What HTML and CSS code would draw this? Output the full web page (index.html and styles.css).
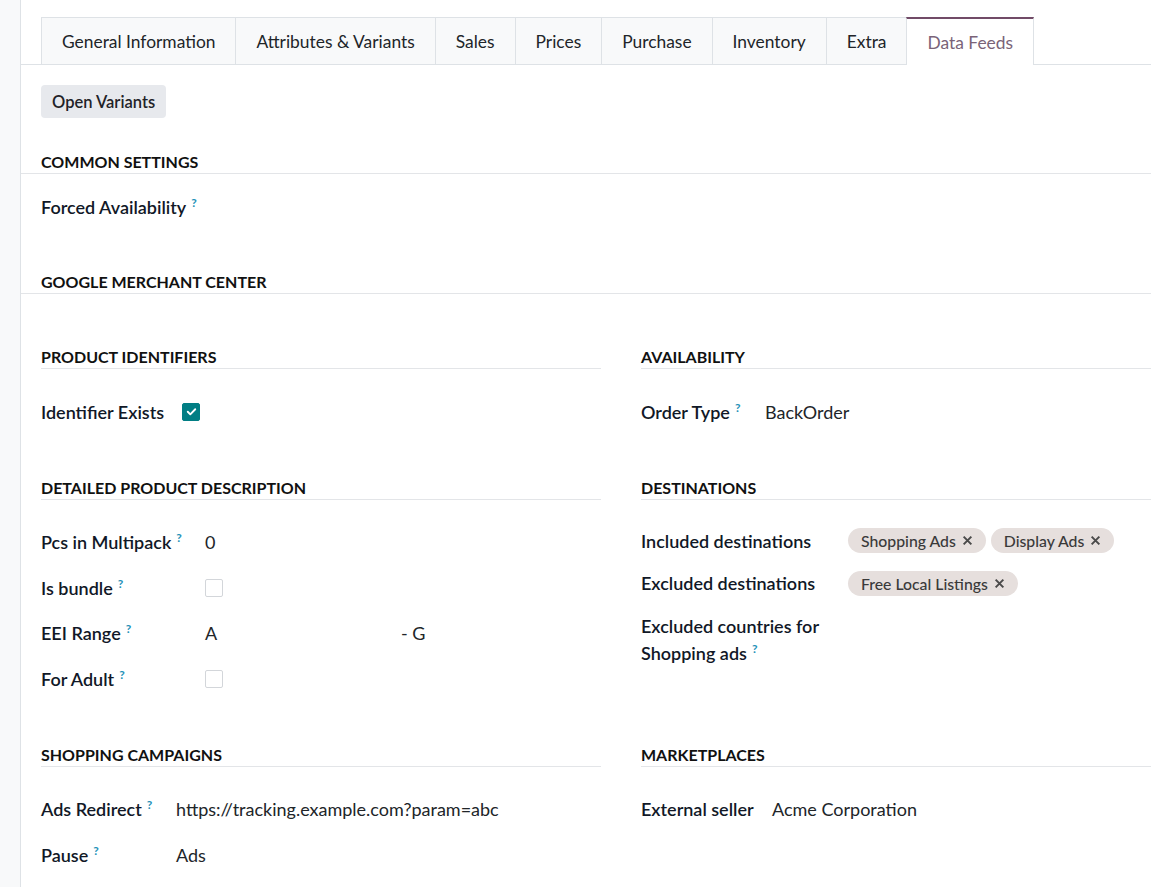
FILE: index.html
```html
<!DOCTYPE html>
<html lang="en">
<head>
<meta charset="UTF-8">
<meta name="viewport" content="width=device-width, initial-scale=1.0">
<title>Product - Data Feeds</title>
<link rel="stylesheet" href="styles.css">
</head>
<body>
<div class="layout">
    <aside class="sidebar"></aside>

    <main class="sheet">
        <nav class="tabs">
            <a class="tab" href="#">General Information</a>
            <a class="tab" href="#">Attributes &amp; Variants</a>
            <a class="tab" href="#">Sales</a>
            <a class="tab" href="#">Prices</a>
            <a class="tab" href="#">Purchase</a>
            <a class="tab" href="#">Inventory</a>
            <a class="tab" href="#">Extra</a>
            <a class="tab active" href="#">Data Feeds</a>
        </nav>

        <div class="page">
            <button class="btn">Open Variants</button>

            <h3 class="separator separator-first">Common Settings</h3>
            <div class="field single">
                <label>Forced Availability<sup class="help">?</sup></label>
            </div>

            <h3 class="separator separator-gmc">Google Merchant Center</h3>

            <div class="groups">
                <section class="group">
                    <h4 class="group-title">Product Identifiers</h4>
                    <div class="field cols-ident">
                        <label>Identifier Exists</label>
                        <span class="checkbox on">
                            <svg viewBox="0 0 16 16" width="15" height="15"><path d="M4 8.3l2.7 2.7L12 5.6" fill="none" stroke="#fff" stroke-width="2" stroke-linecap="round" stroke-linejoin="round"/></svg>
                        </span>
                    </div>
                </section>

                <section class="group">
                    <h4 class="group-title">Availability</h4>
                    <div class="field cols-order">
                        <label>Order Type<sup class="help">?</sup></label>
                        <span class="value">BackOrder</span>
                    </div>
                </section>

                <section class="group">
                    <h4 class="group-title">Detailed Product Description</h4>
                    <div class="field cols-detail">
                        <label>Pcs in Multipack<sup class="help">?</sup></label>
                        <span class="value">0</span>
                    </div>
                    <div class="field cols-detail">
                        <label>Is bundle<sup class="help">?</sup></label>
                        <span class="checkbox"></span>
                    </div>
                    <div class="field cols-detail">
                        <label>EEI Range<sup class="help">?</sup></label>
                        <span class="value range"><span class="range-from">A</span><span>- G</span></span>
                    </div>
                    <div class="field cols-detail">
                        <label>For Adult<sup class="help">?</sup></label>
                        <span class="checkbox"></span>
                    </div>
                </section>

                <section class="group">
                    <h4 class="group-title">Destinations</h4>
                    <div class="field cols-dest tight">
                        <label>Included destinations</label>
                        <span class="tags">
                            <span class="tag">Shopping Ads <svg viewBox="0 0 10 10" width="11" height="11"><path d="M1.5 1.5l7 7M8.5 1.5l-7 7" stroke="#4a4a4a" stroke-width="1.8"/></svg></span>
                            <span class="tag">Display Ads <svg viewBox="0 0 10 10" width="11" height="11"><path d="M1.5 1.5l7 7M8.5 1.5l-7 7" stroke="#4a4a4a" stroke-width="1.8"/></svg></span>
                        </span>
                    </div>
                    <div class="field cols-dest tight">
                        <label>Excluded destinations</label>
                        <span class="tags">
                            <span class="tag">Free Local Listings <svg viewBox="0 0 10 10" width="11" height="11"><path d="M1.5 1.5l7 7M8.5 1.5l-7 7" stroke="#4a4a4a" stroke-width="1.8"/></svg></span>
                        </span>
                    </div>
                    <div class="field cols-dest multi">
                        <label>Excluded countries for Shopping ads<sup class="help">?</sup></label>
                        <span class="value"></span>
                    </div>
                </section>

                <section class="group">
                    <h4 class="group-title">Shopping Campaigns</h4>
                    <div class="field cols-shop">
                        <label>Ads Redirect<sup class="help">?</sup></label>
                        <span class="value">https://tracking.example.com?param=abc</span>
                    </div>
                    <div class="field cols-shop">
                        <label>Pause<sup class="help">?</sup></label>
                        <span class="value">Ads</span>
                    </div>
                </section>

                <section class="group">
                    <h4 class="group-title">Marketplaces</h4>
                    <div class="field cols-market">
                        <label>External seller</label>
                        <span class="value">Acme Corporation</span>
                    </div>
                </section>
            </div>
        </div>
    </main>
</div>
</body>
</html>
```

FILE: styles.css
```css
* {
    box-sizing: border-box;
}
body {
    margin: 0;
    font-family: Lato, "Noto Sans", sans-serif;
    font-size: 18px;
    color: #212529;
    background-color: #fff;
}
.layout {
    display: flex;
    min-height: 100vh;
}
.sidebar {
    width: 21px;
    flex-shrink: 0;
    background-color: #f8f9fa;
    border-right: 1px solid #dee2e6;
}
.sheet {
    flex: 1;
    min-width: 0;
}

/* tabs */
.tabs {
    display: flex;
    padding: 17px 0 0 20px;
    border-bottom: 1px solid #dee2e6;
}
.tab {
    height: 47px;
    padding: 0 20px;
    display: flex;
    align-items: center;
    border: 1px solid #dee2e6;
    border-bottom: none;
    margin-left: -1px;
    background-color: #f8f9fa;
    font-size: 17.4px;
    color: #212529;
    text-decoration: none;
}
.tab:first-child {
    margin-left: 0;
}
.tab.active {
    height: 48px;
    margin-bottom: -1px;
    background-color: #fff;
    border-top: 2px solid #714b67;
    color: #7a6378;
}

/* page */
.page {
    padding: 20px 0 40px 20px;
}
.btn {
    height: 33px;
    padding: 0 11px;
    border: none;
    border-radius: 4px;
    background-color: #e7e9ed;
    font-family: inherit;
    font-size: 16.5px;
    font-weight: 600;
    color: #1f2328;
    cursor: pointer;
}
.separator,
.group-title {
    margin: 0;
    padding-bottom: 1px;
    line-height: 20px;
    font-size: 16px;
    font-weight: 700;
    text-transform: uppercase;
    color: #111;
    border-bottom: 1px solid #e3e5e8;
}
.separator {
    margin-left: -20px;
    padding-left: 20px;
}
.separator-first {
    margin-top: 34px;
}
.separator-gmc {
    margin-top: 43px;
}
.group-title {
    margin-bottom: 20px;
}

/* fields */
.field {
    display: grid;
    align-items: center;
    min-height: 45.5px;
}
.field label {
    font-weight: 600;
    color: #111827;
}
.field.single {
    display: flex;
    margin-top: 10px;
    min-height: 45px;
}
.field.tight {
    min-height: 42.5px;
}
.field.multi {
    align-items: start;
    padding: 8px 0;
    line-height: 27.5px;
}
.cols-ident { grid-template-columns: 141px 1fr; }
.cols-detail { grid-template-columns: 164px 1fr; }
.cols-shop { grid-template-columns: 135px 1fr; }
.cols-order { grid-template-columns: 124px 1fr; }
.cols-dest { grid-template-columns: 207px 1fr; }
.cols-market { grid-template-columns: 131px 1fr; }

.help {
    display: inline-block;
    margin-left: 5px;
    font-size: 12px;
    font-weight: 700;
    color: #2591b8;
    line-height: 11px;
    vertical-align: 7px;
}
.value {
    color: #212529;
}
.range {
    display: flex;
}
.range-from {
    width: 196px;
}
.checkbox {
    display: flex;
    align-items: center;
    justify-content: center;
    width: 18px;
    height: 18px;
    border: 1px solid #d3d6da;
    border-radius: 2px;
}
.checkbox.on {
    background-color: #017e84;
    border-color: #017e84;
}

/* groups */
.groups {
    display: grid;
    grid-template-columns: 560px 1fr;
    column-gap: 40px;
    row-gap: 43px;
    margin-top: 53px;
}

/* tags */
.tags {
    display: flex;
    gap: 5px;
}
.tag {
    display: inline-flex;
    align-items: center;
    gap: 6px;
    height: 25px;
    padding: 0 13px;
    border-radius: 13px;
    background-color: #e6dfdd;
    font-size: 15.8px;
    font-weight: 500;
    color: #3a3a3a;
}
```
